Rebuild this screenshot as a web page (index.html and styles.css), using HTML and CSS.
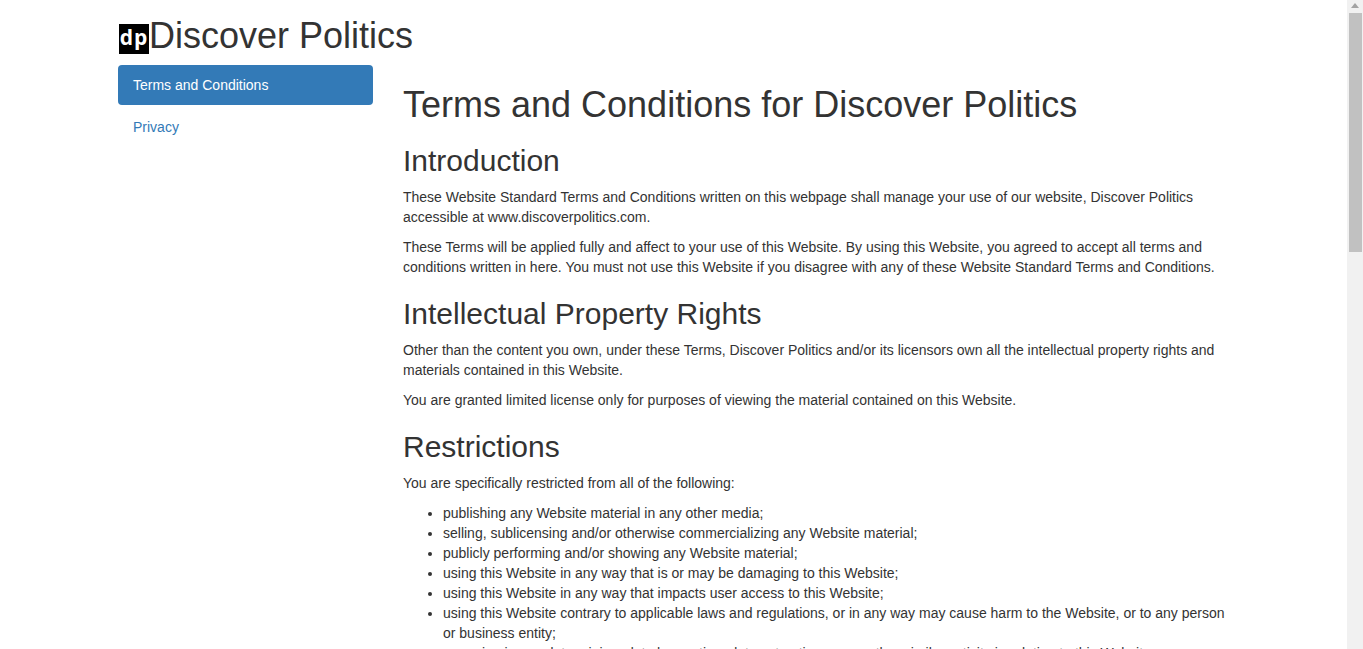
FILE: index.html
```html
<!DOCTYPE html>
<html lang="en">
<head>
    <meta charset="UTF-8">
    <meta name="viewport" content="width=device-width, initial-scale=1.0">
    <title>Terms and Conditions</title>
    <link rel="stylesheet" href="styles.css">
</head>
<body>
    <div class="page">
        <div class="container">
            <h1 class="brand"><span class="logo">dp</span>Discover Politics</h1>
            <div class="columns">
                <div class="sidebar">
                    <ul class="side-nav">
                        <li class="active"><a href="#">Terms and Conditions</a></li>
                        <li><a href="#">Privacy</a></li>
                    </ul>
                </div>
                <div class="content">
                    <h1>Terms and Conditions for Discover Politics</h1>

                    <h2>Introduction</h2>
                    <p>These Website Standard Terms and Conditions written on this webpage shall manage your use of our website, Discover Politics accessible at www.discoverpolitics.com.</p>
                    <p>These Terms will be applied fully and affect to your use of this Website. By using this Website, you agreed to accept all terms and conditions written in here. You must not use this Website if you disagree with any of these Website Standard Terms and Conditions.</p>

                    <h2>Intellectual Property Rights</h2>
                    <p>Other than the content you own, under these Terms, Discover Politics and/or its licensors own all the intellectual property rights and materials contained in this Website.</p>
                    <p>You are granted limited license only for purposes of viewing the material contained on this Website.</p>

                    <h2>Restrictions</h2>
                    <p>You are specifically restricted from all of the following:</p>
                    <ul>
                        <li>publishing any Website material in any other media;</li>
                        <li>selling, sublicensing and/or otherwise commercializing any Website material;</li>
                        <li>publicly performing and/or showing any Website material;</li>
                        <li>using this Website in any way that is or may be damaging to this Website;</li>
                        <li>using this Website in any way that impacts user access to this Website;</li>
                        <li>using this Website contrary to applicable laws and regulations, or in any way may cause harm to the Website, or to any person or business entity;</li>
                        <li>engaging in any data mining, data harvesting, data extracting or any other similar activity in relation to this Website;</li>
                    </ul>
                </div>
            </div>
        </div>
    </div>
    <div class="scrollbar">
        <div class="scroll-up"></div>
        <div class="scroll-thumb"></div>
    </div>
</body>
</html>
```

FILE: styles.css
```css
*{
    box-sizing: border-box;
}
html, body{
    height: 100%;
    margin: 0;
    overflow: hidden;
}
body{
    display: flex;
    font-family: "Liberation Sans", Arial, sans-serif;
    font-size: 14px;
    line-height: 20px;
    color: #333;
    background-color: #fff;
}
.page{
    flex: 1;
    min-width: 0;
    height: 100%;
    overflow: hidden;
}
.container{
    width: 1140px;
    margin-left: 103px;
}
h1, h2{
    font-weight: 500;
    line-height: 1.1;
    margin: 20px 0 10px;
}
h1{
    font-size: 36px;
}
h2{
    font-size: 30px;
}
p{
    margin: 0 0 10px;
}
ul{
    margin: 0 0 10px;
    padding-left: 40px;
}
a{
    color: #337ab7;
    text-decoration: none;
}
.brand{
    display: flex;
    align-items: flex-end;
    height: 64.6px;
    margin: 0;
    padding: 0 15px 9px;
}
.logo{
    display: flex;
    justify-content: center;
    align-items: center;
    width: 30px;
    height: 30px;
    margin: 0 0 1.6px 1px;
    padding-bottom: 3px;
    background-color: #000;
    color: #fff;
    font-family: "Open Sans", sans-serif;
    font-size: 21px;
    font-weight: 700;
    letter-spacing: 1px;
    line-height: 1;
}
.columns{
    display: grid;
    grid-template-columns: 285px 855px;
}
.sidebar, .content{
    padding: 0 15px;
}
.side-nav{
    margin: 0;
    padding: 0;
    list-style: none;
}
.side-nav li + li{
    margin-top: 2px;
}
.side-nav a{
    display: block;
    padding: 10px 15px;
    border-radius: 4px;
}
.side-nav .active a{
    background-color: #337ab7;
    color: #fff;
}
.scrollbar{
    flex: none;
    display: flex;
    flex-direction: column;
    align-items: center;
    width: 16px;
    height: 100%;
    background-color: #f1f1f1;
}
.scroll-up{
    width: 0;
    height: 0;
    margin: 3px 0 5px;
    border-left: 4px solid transparent;
    border-right: 4px solid transparent;
    border-bottom: 5px solid #a3a3a3;
}
.scroll-thumb{
    width: 13px;
    height: 239px;
    margin-left: 1px;
    background-color: #c1c1c1;
}
```
